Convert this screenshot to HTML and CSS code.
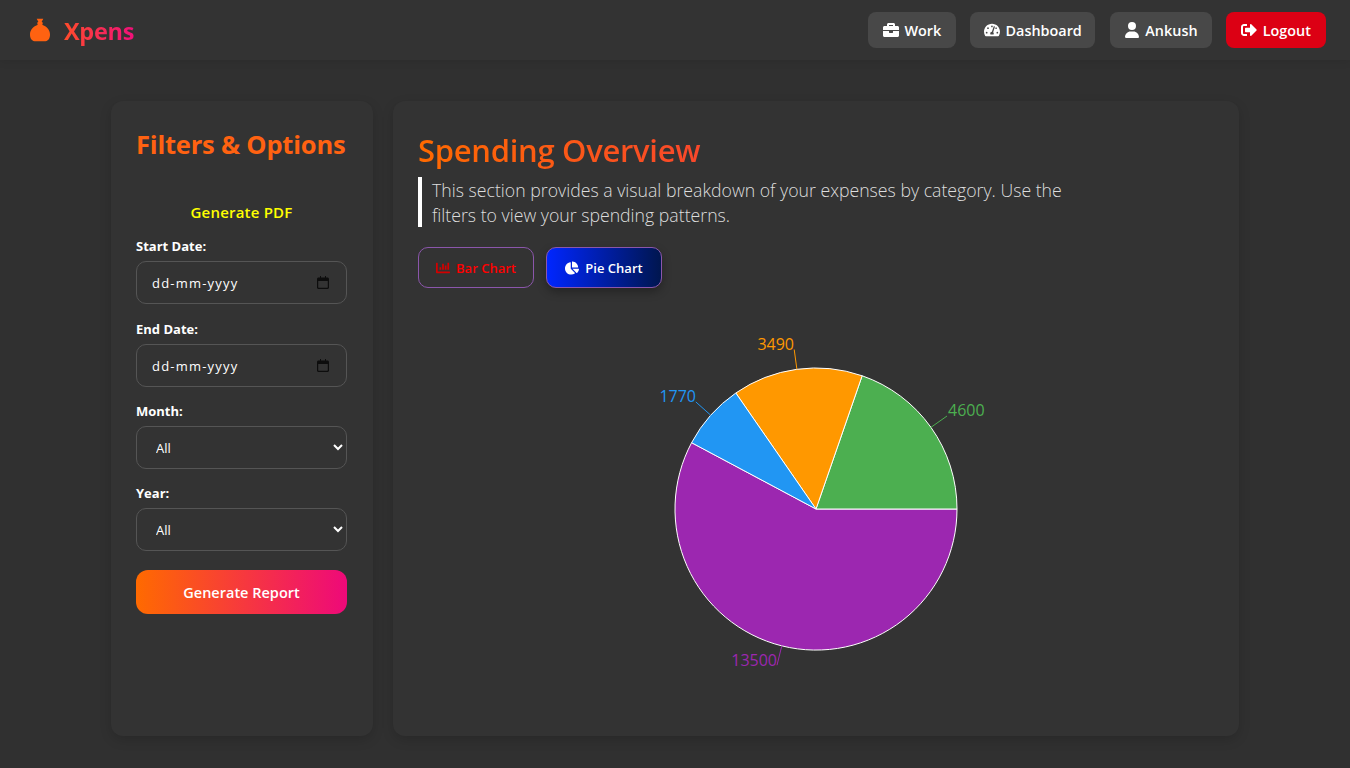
FILE: index.html
```html
<!DOCTYPE html>
<html lang="en">
<head>
  <meta charset="UTF-8">
  <meta name="viewport" content="width=device-width, initial-scale=1.0">
  <title>Xpens - Spending Overview</title>
  <link rel="stylesheet" href="styles.css">
</head>
<body>
  <header class="navbar">
    <a class="brand" href="#">
      <svg class="brand-icon" viewBox="0 0 24 28" aria-hidden="true"><path fill="#ff6211" d="M8 0.500h8l-2 3.500 1.200 1v2l-.7.700C20 9.700 24 13.800 24 19.500c0 2.600-.5 4.500-1.700 5.800-1.300 1.500-3.100 2.200-5.300 2.200H7c-2.200 0-4-.7-5.300-2.200C.5 24 0 22.100 0 19.500c0-5.700 4-9.800 9.500-11.800L8.800 7V5L10 4z"/></svg>
      <span class="brand-name">Xpens</span>
    </a>
    <nav class="nav-links">
      <a class="nav-btn work" href="#">
        <svg class="nav-icon" viewBox="0 0 512 512" aria-hidden="true"><path d="M320 336c0 8.840-7.160 16-16 16h-96c-8.840 0-16-7.160-16-16v-48H0v144c0 25.600 22.400 48 48 48h416c25.600 0 48-22.400 48-48V288H320v48zm144-208h-80V80c0-25.600-22.400-48-48-48H176c-25.600 0-48 22.400-48 48v48H48c-25.600 0-48 22.400-48 48v80h512v-80c0-25.600-22.400-48-48-48zm-144 0H192V96h128v32z"/></svg>
        Work
      </a>
      <a class="nav-btn dashboard" href="#">
        <svg class="nav-icon" viewBox="0 0 576 512" aria-hidden="true"><path d="M288 32C128.940 32 0 160.940 0 320c0 52.800 14.250 102.260 39.060 144.800 5.610 9.620 16.300 15.200 27.440 15.200h443c11.140 0 21.830-5.580 27.440-15.200C561.750 422.260 576 372.800 576 320c0-159.060-128.940-288-288-288zm0 64c14.710 0 26.580 10.130 30.320 23.650-1.110 2.260-2.640 4.230-3.450 6.670l-9.220 27.670c-5.130 3.490-10.970 6.010-17.640 6.010-17.670 0-32-14.330-32-32S270.330 96 288 96zM96 384c-17.670 0-32-14.330-32-32s14.330-32 32-32 32 14.330 32 32-14.330 32-32 32zm48-160c-17.670 0-32-14.330-32-32s14.330-32 32-32 32 14.330 32 32-14.330 32-32 32zm246.770-72.410l-61.330 184C343.130 347.330 352 364.540 352 384c0 11.720-3.380 22.550-8.880 32H232.880c-5.500-9.450-8.880-20.280-8.880-32 0-33.940 26.500-61.430 59.900-63.590l61.340-184.010c4.170-12.560 17.730-19.450 30.360-15.170 12.570 4.190 19.350 17.790 15.170 30.360zm14.660 57.200l15.520-46.550c3.470-1.290 7.130-2.230 11.050-2.230 17.670 0 32 14.330 32 32s-14.330 32-32 32c-11.380-.01-20.890-6.280-26.570-15.220zM480 384c-17.670 0-32-14.330-32-32s14.330-32 32-32 32 14.330 32 32-14.330 32-32 32z"/></svg>
        Dashboard
      </a>
      <a class="nav-btn user" href="#">
        <svg class="nav-icon" viewBox="0 0 448 512" aria-hidden="true"><path d="M224 256A128 128 0 1 0 224 0a128 128 0 1 0 0 256zm-45.700 48C79.800 304 0 383.800 0 482.300C0 498.700 13.300 512 29.700 512H418.300c16.400 0 29.700-13.300 29.700-29.700C448 383.800 368.200 304 269.700 304H178.300z"/></svg>
        Ankush
      </a>
      <a class="nav-btn logout" href="#">
        <svg class="nav-icon" viewBox="0 0 512 512" aria-hidden="true"><path d="M497 273L329 441c-15 15-41 4.500-41-17v-96H152c-13.300 0-24-10.700-24-24v-96c0-13.300 10.700-24 24-24h136V88c0-21.400 25.900-32 41-17l168 168c9.300 9.400 9.300 24.600 0 34zM192 436v-40c0-6.600-5.400-12-12-12H96c-17.700 0-32-14.300-32-32V160c0-17.700 14.300-32 32-32h84c6.600 0 12-5.400 12-12V76c0-6.600-5.400-12-12-12H96c-53 0-96 43-96 96v192c0 53 43 96 96 96h84c6.600 0 12-5.400 12-12z"/></svg>
        Logout
      </a>
    </nav>
  </header>

  <div class="container">
    <aside class="sidebar">
      <h2>Filters &amp; Options</h2>
      <a class="pdf-link" href="#">Generate PDF</a>
      <form class="filters">
        <div class="field">
          <label for="startDate">Start Date:</label>
          <div class="date-box">
            <input type="text" id="startDate" value="dd-mm-yyyy">
            <svg class="calendar" viewBox="0 0 12 13" aria-hidden="true"><path d="M3 0h1v1.500h4V0h1v1.500h1.500c.8 0 1.500.7 1.500 1.500v8.500c0 .8-.7 1.500-1.500 1.500h-9C.7 13 0 12.300 0 11.500V3c0-.8.7-1.500 1.500-1.500H3zM1.200 5v6.300c0 .3.2.5.5.5h8.600c.3 0 .5-.2.500-.5V5z"/></svg>
          </div>
        </div>
        <div class="field">
          <label for="endDate">End Date:</label>
          <div class="date-box">
            <input type="text" id="endDate" value="dd-mm-yyyy">
            <svg class="calendar" viewBox="0 0 12 13" aria-hidden="true"><path d="M3 0h1v1.500h4V0h1v1.500h1.500c.8 0 1.500.7 1.500 1.500v8.500c0 .8-.7 1.500-1.500 1.500h-9C.7 13 0 12.300 0 11.500V3c0-.8.7-1.500 1.500-1.500H3zM1.200 5v6.300c0 .3.2.5.5.5h8.600c.3 0 .5-.2.500-.5V5z"/></svg>
          </div>
        </div>
        <div class="field">
          <label for="month">Month:</label>
          <select id="month"><option>All</option></select>
        </div>
        <div class="field">
          <label for="year">Year:</label>
          <select id="year"><option>All</option></select>
        </div>
        <button type="button" class="report-btn">Generate Report</button>
      </form>
    </aside>

    <main class="content">
      <h1>Spending Overview</h1>
      <p class="intro">This section provides a visual breakdown of your expenses by category. Use the filters to view your spending patterns.</p>
      <div class="tabs">
        <button type="button" class="tab">
          <svg class="tab-icon" viewBox="0 0 512 512" aria-hidden="true"><path d="M332.800 320h38.400c6.400 0 12.800-6.400 12.800-12.800V172.800c0-6.400-6.400-12.800-12.800-12.800h-38.400c-6.400 0-12.800 6.400-12.800 12.800v134.400c0 6.400 6.400 12.800 12.800 12.800zm96 0h38.400c6.400 0 12.800-6.400 12.800-12.800V76.800c0-6.400-6.400-12.800-12.800-12.800h-38.400c-6.400 0-12.800 6.400-12.800 12.800v230.400c0 6.400 6.400 12.800 12.800 12.800zm-288 0h38.400c6.400 0 12.800-6.400 12.800-12.800v-70.400c0-6.400-6.400-12.800-12.800-12.800h-38.400c-6.400 0-12.800 6.400-12.800 12.800v70.400c0 6.400 6.400 12.800 12.800 12.800zm96 0h38.400c6.400 0 12.800-6.400 12.800-12.800V108.800c0-6.400-6.400-12.800-12.800-12.800h-38.400c-6.400 0-12.800 6.400-12.800 12.800v198.400c0 6.400 6.400 12.800 12.800 12.800zM496 384H64V80c0-8.840-7.160-16-16-16H16C7.160 64 0 71.160 0 80v336c0 17.670 14.330 32 32 32h464c8.840 0 16-7.160 16-16v-32c0-8.840-7.160-16-16-16z"/></svg>
          Bar Chart
        </button>
        <button type="button" class="tab active">
          <svg class="tab-icon" viewBox="0 0 544 512" aria-hidden="true"><path d="M527.790 288H290.500l158.030 158.030c6.040 6.040 15.980 6.530 22.190.68 38.700-36.460 65.320-85.610 73.130-140.860 1.340-9.460-6.510-17.850-16.060-17.850zm-15.830-64.800C503.720 103.740 408.260 8.280 288.800.04 279.680-.59 272 7.100 272 16.240V240h223.770c9.140 0 16.820-7.680 16.190-16.800zM224 288V50.710c0-9.550-8.390-17.400-17.840-16.060C86.990 51.490-4.100 155.600.14 280.370 4.500 408.510 114.830 513.590 243.030 511.980c50.400-.63 96.970-16.870 135.260-44.030 7.900-5.600 8.420-17.230 1.570-24.080L224 288z"/></svg>
          Pie Chart
        </button>
      </div>

      <!-- viewBox uses page coordinates so the slices are easy to check against the design -->
      <svg class="chart" viewBox="418 308 796 400" role="img" aria-label="Pie chart of spending by category">
        <g stroke="#fff" stroke-width="1" transform="translate(-1 0)">
          <path fill="#9c27b0" d="M817 509L692.600 442.700A141 141 0 1 0 958 509Z"/>
          <path fill="#4caf50" d="M817 509L958 509A141 141 0 0 0 863.150 375.770Z"/>
          <path fill="#ff9800" d="M817 509L863.150 375.770A141 141 0 0 0 736.800 393Z"/>
          <path fill="#2196f3" d="M817 509L736.800 393A141 141 0 0 0 692.600 442.700Z"/>
        </g>
        <g fill="none" transform="translate(-1 0)">
          <path stroke="#4caf50" d="M932 427.300L948 416"/>
          <path stroke="#ff9800" d="M797.900 369.300L795.200 349.500"/>
          <path stroke="#2196f3" d="M711.700 415.200L696.800 401.900"/>
          <path stroke="#9c27b0" d="M782.800 645.800L778 665.200"/>
        </g>
        <g class="chart-label">
          <text x="948" y="416" fill="#4caf50">4600</text>
          <text x="794" y="350" fill="#ff9800" text-anchor="end">3490</text>
          <text x="696" y="402" fill="#2196f3" text-anchor="end">1770</text>
          <text x="777" y="666" fill="#9c27b0" text-anchor="end">13500</text>
        </g>
      </svg>
    </main>
  </div>
</body>
</html>
```

FILE: styles.css
```css
* {
  box-sizing: border-box;
}

body {
  margin: 0;
  height: 768px;
  overflow: hidden;
  font-family: 'Open Sans', 'Noto Sans', sans-serif;
  background-color: #303030;
  color: #fff;
}

a {
  text-decoration: none;
}

/* Top bar */
.navbar {
  display: flex;
  justify-content: space-between;
  align-items: center;
  height: 60px;
  padding: 0 24px 0 30px;
  background: #333333;
  box-shadow: 0 2px 8px rgba(0, 0, 0, 0.08);
}

.brand {
  display: flex;
  align-items: center;
  gap: 14px;
}

.brand-icon {
  width: 20px;
  height: 24px;
}

.brand-name {
  padding-top: 2px;
  font-size: 23.5px;
  font-weight: 700;
  letter-spacing: -0.3px;
  background: linear-gradient(to right, #ff4b2b, #f0107a);
  -webkit-background-clip: text;
  background-clip: text;
  color: transparent;
}

.nav-links {
  display: flex;
  gap: 14.3px;
}

.nav-btn {
  display: flex;
  align-items: center;
  justify-content: center;
  gap: 5.5px;
  height: 36px;
  border-radius: 8px;
  background: #484848;
  color: #ffffff;
  font-size: 14.4px;
  font-weight: 600;
}

.nav-btn.work {
  width: 88px;
}

.nav-btn.dashboard {
  width: 125px;
}

.nav-btn.user {
  width: 102px;
}

.nav-btn.logout {
  width: 100px;
  background: #dc0014;
}

.nav-icon {
  width: 16px;
  height: 16px;
  fill: #ffffff;
}

/* Page layout */
.container {
  display: flex;
  gap: 20px;
  width: 1128px;
  height: 635px;
  margin: 41px auto 0;
}

.sidebar,
.content {
  background: #333333;
  border-radius: 12px;
  box-shadow: 0 4px 12px rgba(0, 0, 0, 0.15);
}

.sidebar {
  flex: 0 0 262px;
  min-width: 0;
  padding: 25px 26px 25px 25px;
}

.sidebar h2 {
  margin: 0;
  font-size: 25.5px;
  font-weight: 700;
  line-height: 36px;
  letter-spacing: -0.2px;
  color: #ff6211;
  white-space: nowrap;
}

.pdf-link {
  display: block;
  margin-top: 40px;
  color: #ffff00;
  font-size: 15px;
  font-weight: 600;
  line-height: 20px;
  letter-spacing: 0.2px;
  text-align: center;
}

.filters {
  display: flex;
  flex-direction: column;
  margin-top: 15px;
}

.field {
  display: flex;
  flex-direction: column;
  margin-bottom: 15px;
}

.field:first-child {
  margin-bottom: 16px;
}

.field label {
  margin-bottom: 6px;
  font-size: 13px;
  font-weight: 700;
  line-height: 18px;
}

.date-box,
select {
  height: 43px;
  border: 1px solid #555555;
  border-radius: 10px;
  background: #333333;
  color: #ffffff;
}

.date-box {
  display: flex;
  align-items: center;
  padding: 0 17px 0 15px;
}

.date-box input {
  flex: 1;
  min-width: 0;
  padding: 0;
  border: none;
  background: none;
  color: #ffffff;
  font-family: inherit;
  font-size: 13px;
  font-weight: 400;
  letter-spacing: 1.2px;
  outline: none;
}

.calendar {
  width: 12px;
  height: 13px;
  fill: #0d0d0d;
}

select {
  padding: 0 15px;
  font-family: inherit;
  font-size: 13px;
  font-weight: 400;
}

.report-btn {
  height: 44px;
  margin-top: 4px;
  border: none;
  border-radius: 12px;
  background: linear-gradient(to right, #ff6a00, #ee0979);
  color: #ffffff;
  font-family: inherit;
  font-size: 14.5px;
  font-weight: 600;
  cursor: pointer;
}

/* Main panel */
.content {
  flex: 1;
  min-width: 0;
  padding: 25px;
}

.content h1 {
  margin: 0 0 2px;
  font-size: 31px;
  font-weight: 600;
  line-height: 49px;
  letter-spacing: -0.3px;
  background: linear-gradient(to right, #ff6a00, #ee0979);
  -webkit-background-clip: text;
  background-clip: text;
  color: transparent;
}

.intro {
  max-width: 660px;
  height: 50px;
  margin: 0;
  padding: 1px 0 0 10px;
  border-left: 4px solid #ffffff;
  color: #dddddd;
  font-size: 17.7px;
  font-weight: 300;
  line-height: 25px;
}

.tabs {
  display: flex;
  gap: 12px;
  margin-top: 20px;
}

.tab {
  display: flex;
  align-items: center;
  justify-content: center;
  gap: 6px;
  width: 116px;
  height: 41px;
  border: 1px solid #8b56ab;
  border-radius: 10px;
  background: #333333;
  color: #ff0000;
  font-family: inherit;
  font-size: 13px;
  font-weight: 600;
  cursor: pointer;
}

.tab.active {
  background: linear-gradient(to right, #0026ff, #00164f);
  color: #ffffff;
  box-shadow: 0 4px 10px rgba(0, 0, 0, 0.3);
}

.tab-icon {
  width: 14px;
  height: 14px;
  fill: #d40000;
}

.tab.active .tab-icon {
  fill: #ffffff;
}

.chart {
  display: block;
  width: 796px;
  height: 400px;
  margin-top: 20px;
}

.chart-label {
  font-size: 16px;
  font-weight: 400;
}
```
